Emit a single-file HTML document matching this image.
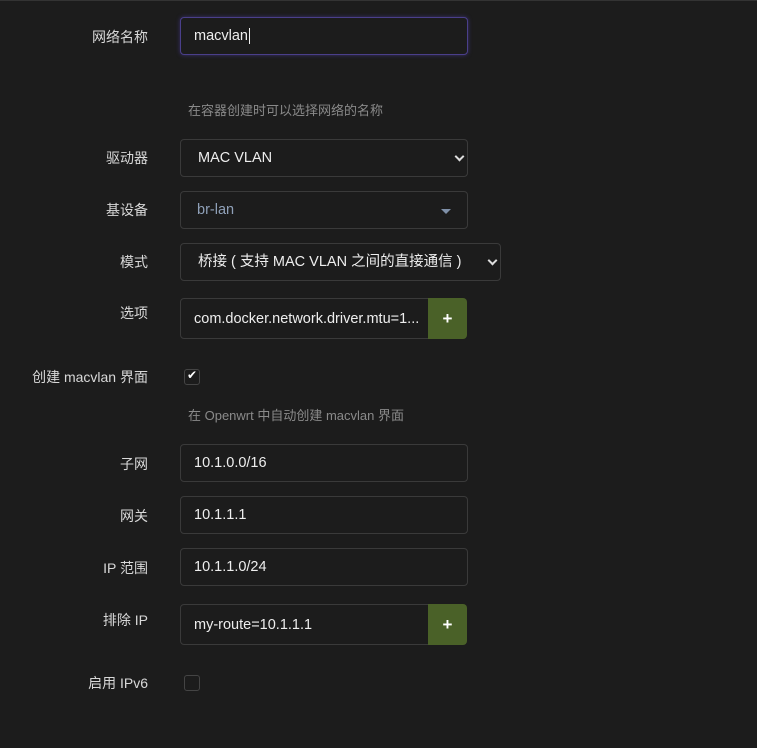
<!DOCTYPE html>
<html><head><meta charset="utf-8"><style>
body{margin:0;background:#1c1c1c;width:757px;height:748px;overflow:hidden;font-family:"Liberation Sans","Noto Sans CJK SC",sans-serif;color:#ddd;font-size:14px;position:relative}
.top{position:absolute;left:0;top:0;width:757px;height:1px;background:#333}
.l{position:absolute;right:609px;white-space:nowrap;font-size:14px;color:#d8d8d8}
.i{position:absolute;left:180px;width:286px;height:36px;border:1px solid #3a3a3a;border-radius:4px;background:#1c1c1c;box-sizing:content-box;color:#eee;line-height:36px;text-indent:13px;font-size:14.5px}
.h{position:absolute;left:188px;font-size:13px;color:#8a8a8a}
.btn{position:absolute;left:428px;width:39px;background:#4a6128;border-radius:0 4px 4px 0;color:#fff;text-align:center;font-size:17px;font-weight:bold}
.cb{position:absolute;left:184px;width:14px;height:14px;border:1px solid #444;border-radius:3px;background:#1c1c1c}
.chev{position:absolute;top:14px;width:6px;height:6px;border-right:2px solid #ddd;border-bottom:2px solid #ddd;transform:rotate(45deg)}
</style></head><body>
<div class="top"></div>
<div class="l" style="top:27px">网络名称</div>
<div class="i" style="top:17px;border-color:#4a3f8a;box-shadow:0 0 4px #3a3170">macvlan<span style="border-left:1px solid #eee;margin-left:1px"></span></div>
<div class="h" style="top:100px">在容器创建时可以选择网络的名称</div>
<div class="l" style="top:148px">驱动器</div>
<div class="i" style="top:139px;text-indent:17px">MAC VLAN<div class="chev" style="left:275px;width:5px;height:5px;top:13px"></div></div>
<div class="l" style="top:200px">基设备</div>
<div class="i" style="top:191px;color:#8fa0b8;text-indent:16px">br-lan<div style="position:absolute;left:260px;top:17px;border-left:5px solid transparent;border-right:5px solid transparent;border-top:5px solid #7f90a8"></div></div>
<div class="l" style="top:252px">模式</div>
<div class="i" style="top:243px;width:319px;text-indent:17px">桥接 ( 支持 MAC VLAN 之间的直接通信 )<div class="chev" style="left:308px;width:5px;height:5px;top:13px"></div></div>
<div class="l" style="top:303px">选项</div>
<div class="i" style="top:298px;height:39px;line-height:40px;width:248px;border-radius:4px 0 0 4px">com.docker.network.driver.mtu=1...</div>
<div class="btn" style="top:298px;height:41px;line-height:41px">+</div>
<div class="l" style="top:367px">创建 macvlan 界面</div>
<div class="cb" style="top:369px"><span style="position:absolute;left:2px;top:-2px;color:#fff;font-size:12px">✔</span></div>
<div class="h" style="top:405px">在 Openwrt 中自动创建 macvlan 界面</div>
<div class="l" style="top:454px">子网</div>
<div class="i" style="top:444px">10.1.0.0/16</div>
<div class="l" style="top:506px">网关</div>
<div class="i" style="top:496px">10.1.1.1</div>
<div class="l" style="top:558px">IP 范围</div>
<div class="i" style="top:548px">10.1.1.0/24</div>
<div class="l" style="top:610px">排除 IP</div>
<div class="i" style="top:604px;height:39px;line-height:40px;width:248px;border-radius:4px 0 0 4px">my-route=10.1.1.1</div>
<div class="btn" style="top:604px;height:41px;line-height:41px">+</div>
<div class="l" style="top:673px">启用 IPv6</div>
<div class="cb" style="top:675px"></div>
</body></html>
